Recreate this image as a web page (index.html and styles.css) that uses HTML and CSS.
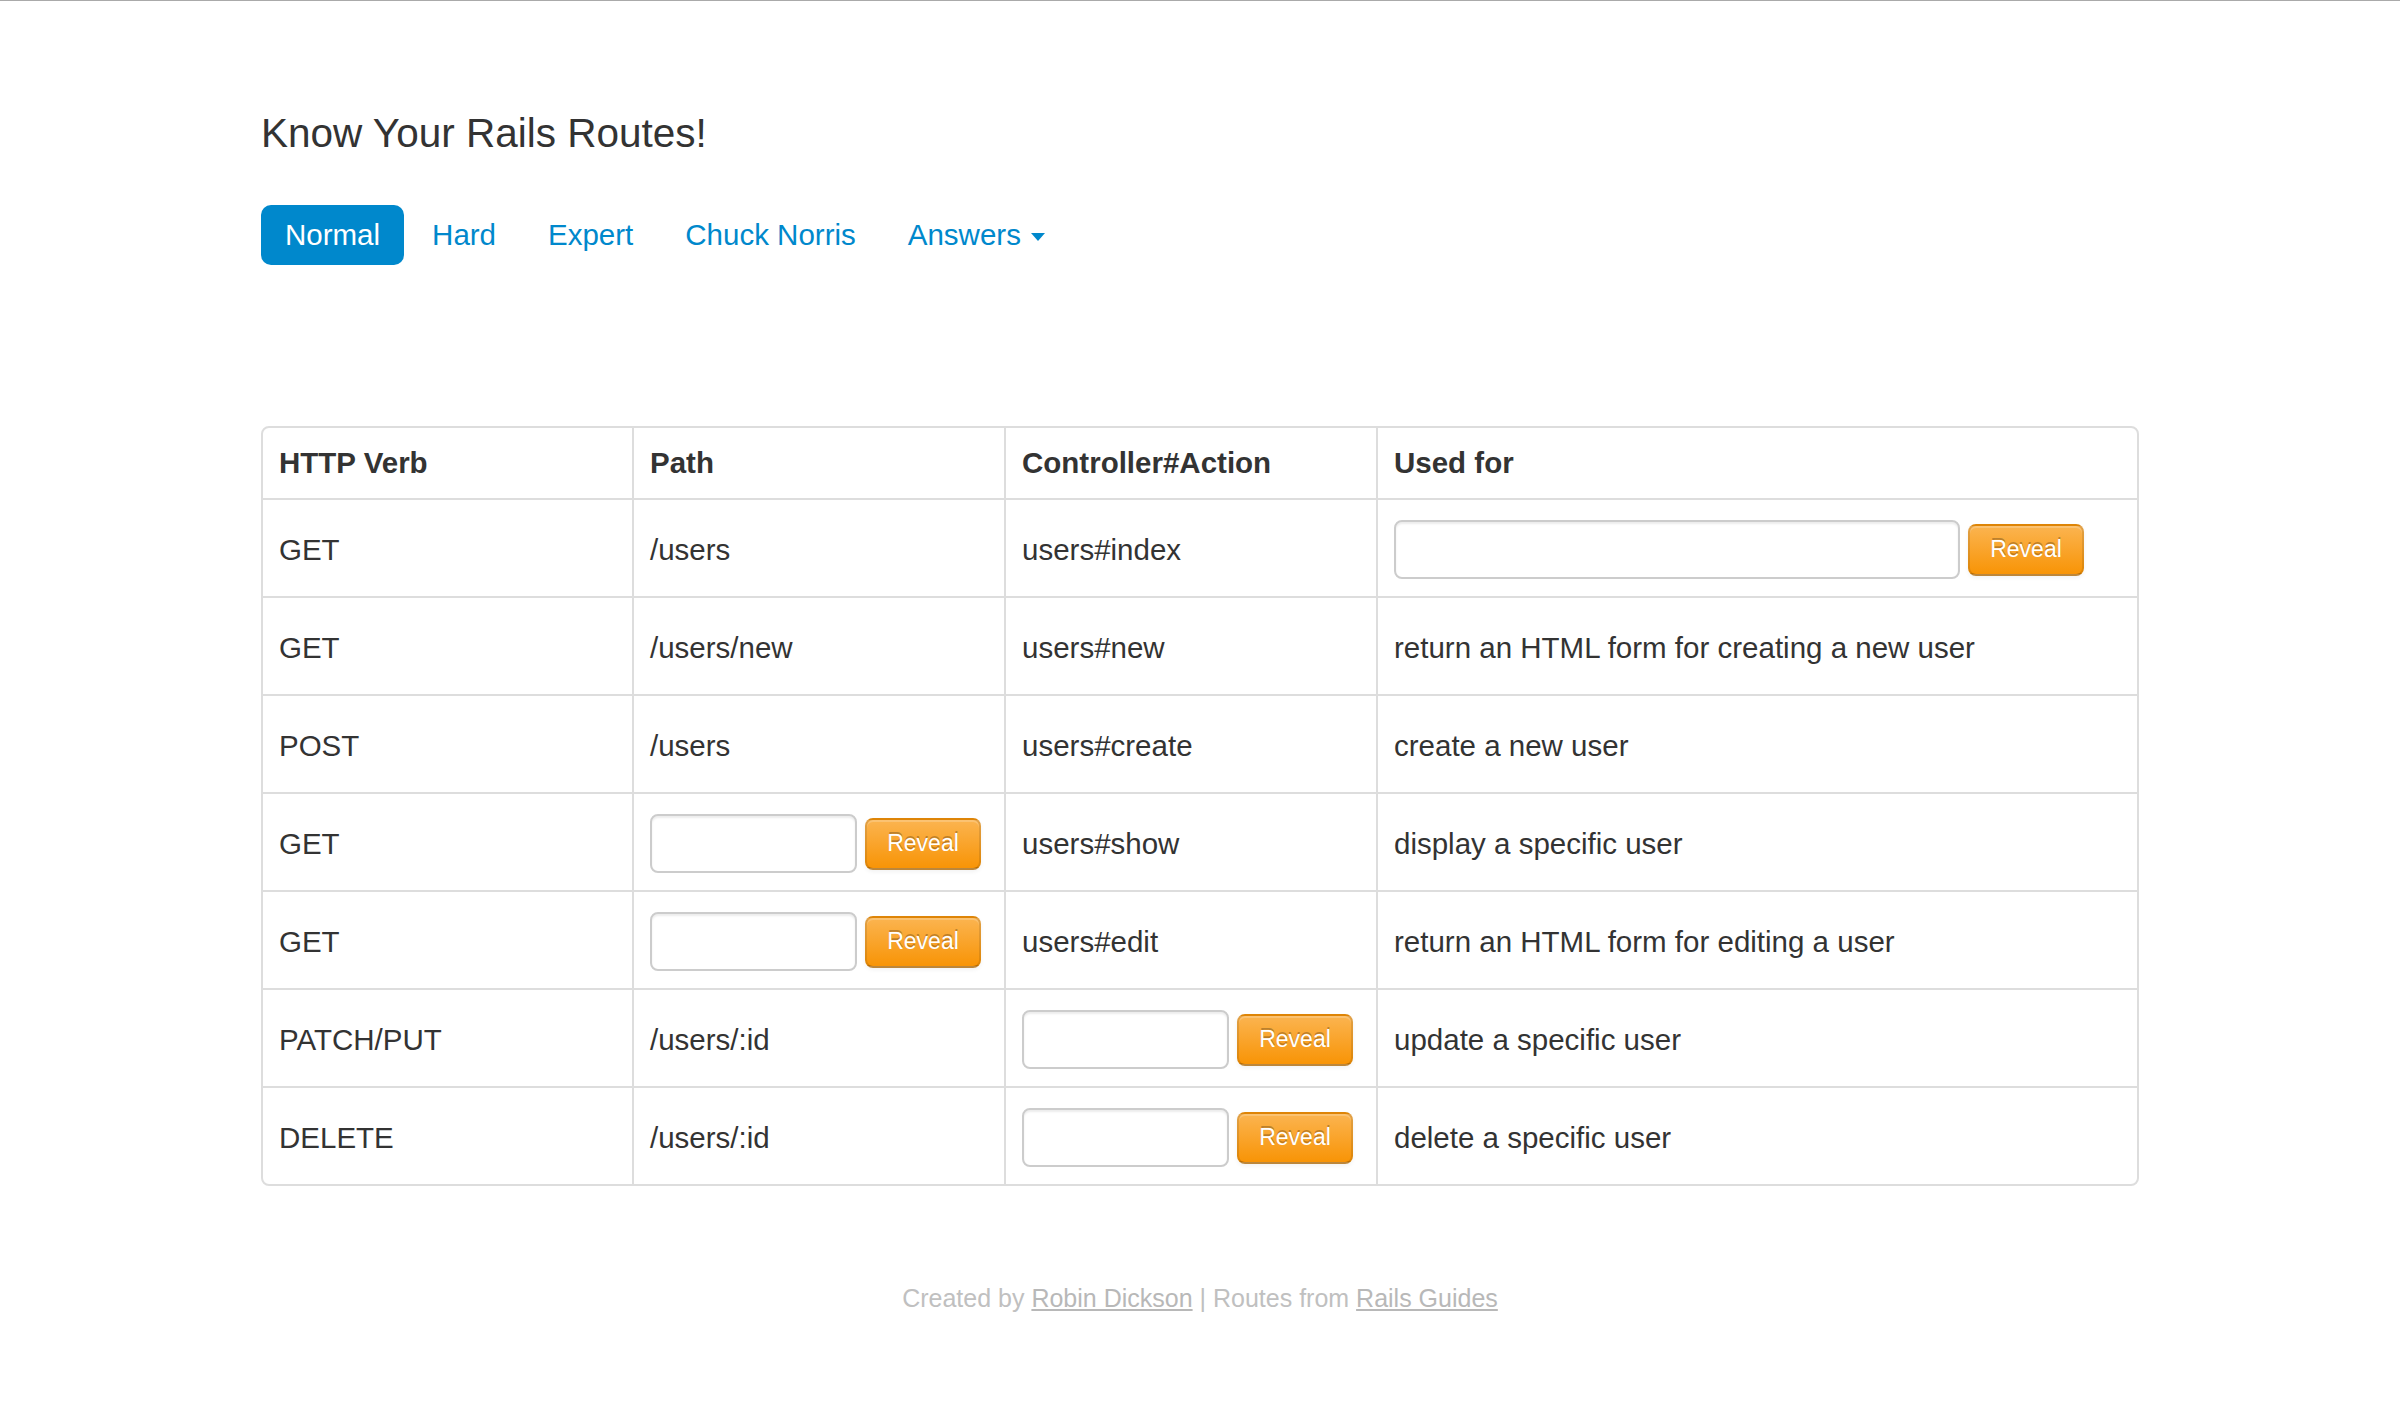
FILE: index.html
```html
<!DOCTYPE html>
<html lang="en">
<head>
<meta charset="utf-8">
<title>Know Your Rails Routes!</title>
<link rel="stylesheet" href="styles.css">
</head>
<body>
<div class="container">
  <h3 class="title">Know Your Rails Routes!</h3>
  <ul class="pills">
    <li><a class="active" href="#">Normal</a></li>
    <li><a href="#">Hard</a></li>
    <li><a href="#">Expert</a></li>
    <li><a href="#">Chuck Norris</a></li>
    <li><a href="#">Answers <b class="caret"></b></a></li>
  </ul>

  <table class="routes">
    <thead>
      <tr>
        <th class="c1">HTTP Verb</th>
        <th class="c2">Path</th>
        <th class="c3">Controller#Action</th>
        <th class="c4">Used for</th>
      </tr>
    </thead>
    <tbody>
      <tr>
        <td>GET</td>
        <td>/users</td>
        <td>users#index</td>
        <td><div class="guess"><input class="field wide" type="text"><button class="reveal">Reveal</button></div></td>
      </tr>
      <tr>
        <td>GET</td>
        <td>/users/new</td>
        <td>users#new</td>
        <td>return an HTML form for creating a new user</td>
      </tr>
      <tr>
        <td>POST</td>
        <td>/users</td>
        <td>users#create</td>
        <td>create a new user</td>
      </tr>
      <tr>
        <td>GET</td>
        <td><div class="guess"><input class="field" type="text"><button class="reveal">Reveal</button></div></td>
        <td>users#show</td>
        <td>display a specific user</td>
      </tr>
      <tr>
        <td>GET</td>
        <td><div class="guess"><input class="field" type="text"><button class="reveal">Reveal</button></div></td>
        <td>users#edit</td>
        <td>return an HTML form for editing a user</td>
      </tr>
      <tr>
        <td>PATCH/PUT</td>
        <td>/users/:id</td>
        <td><div class="guess"><input class="field" type="text"><button class="reveal">Reveal</button></div></td>
        <td>update a specific user</td>
      </tr>
      <tr>
        <td>DELETE</td>
        <td>/users/:id</td>
        <td><div class="guess"><input class="field" type="text"><button class="reveal">Reveal</button></div></td>
        <td>delete a specific user</td>
      </tr>
    </tbody>
  </table>

  <p class="footer">Created by <a href="#">Robin Dickson</a> | Routes from <a href="#">Rails Guides</a></p>
</div>
</body>
</html>
```

FILE: styles.css
```css
html, body {
  margin: 0;
  padding: 0;
  background: #fff;
}
body {
  border-top: 1px solid #aaaaaa;
  font-family: "Liberation Sans", Arial, Helvetica, sans-serif;
  color: #333;
  font-size: 29.5px;
}
.container {
  width: 1878px;
  margin: 0 auto;
}
.title {
  margin: 108px 0 0 0;
  font-size: 40.5px;
  line-height: 48px;
  font-weight: normal;
  color: #333;
}
.pills {
  list-style: none;
  margin: 48px 0 0 0;
  padding: 0;
  display: flex;
}
.pills li {
  margin-right: 4px;
}
.pills a {
  display: block;
  padding: 16px 24px;
  line-height: 28px;
  font-size: 29.5px;
  color: #0088cc;
  text-decoration: none;
  border-radius: 10px;
}
.pills a.active {
  background: #0088cc;
  color: #fff;
}
.caret {
  display: inline-block;
  width: 0;
  height: 0;
  vertical-align: top;
  margin-top: 12px;
  margin-left: 2px;
  border-top: 8px solid #0088cc;
  border-left: 7px solid transparent;
  border-right: 7px solid transparent;
}
.routes {
  margin-top: 161px;
  width: 1878px;
  table-layout: fixed;
  border-collapse: separate;
  border-spacing: 0;
  border: 2px solid #dddddd;
  border-radius: 8px;
}
.routes th, .routes td {
  box-sizing: border-box;
  padding: 0 16px;
  text-align: left;
  vertical-align: middle;
  border-left: 2px solid #dddddd;
  border-top: 2px solid #dddddd;
  line-height: 40px;
}
.routes th:first-child, .routes td:first-child {
  border-left: none;
}
.routes thead th {
  border-top: none;
  height: 70px;
  font-weight: bold;
}
.routes td {
  height: 98px;
  padding-top: 3px;
}
.c1 { width: 369px; }
.c2 { width: 372px; }
.c3 { width: 372px; }
.guess {
  display: flex;
  align-items: center;
  gap: 8px;
}
.field {
  box-sizing: border-box;
  width: 207px;
  height: 59px;
  margin: 0;
  border: 2px solid #cccccc;
  border-radius: 8px;
  background: #fff;
  box-shadow: inset 0 2px 2px rgba(0,0,0,0.075);
  font-size: 28px;
  padding: 8px 12px;
}
.field.wide {
  width: 566px;
}
.reveal {
  box-sizing: border-box;
  width: 116px;
  height: 52px;
  margin: 0;
  padding: 0;
  font-family: "Liberation Sans", Arial, Helvetica, sans-serif;
  font-size: 23px;
  color: #fff;
  text-shadow: 0 -2px 0 rgba(0,0,0,0.25);
  background: linear-gradient(to bottom, #fbb450, #f89406);
  border: 2px solid;
  border-color: rgba(0,0,0,0.1) rgba(0,0,0,0.1) rgba(0,0,0,0.25);
  border-radius: 8px;
  box-shadow: inset 0 2px 0 rgba(255,255,255,0.2), 0 2px 4px rgba(0,0,0,0.05);
}
.footer {
  margin: 92px 0 0 0;
  text-align: center;
  font-size: 25px;
  line-height: 40px;
  color: #c0c0c0;
}
.footer a {
  color: #b8b8b8;
  text-decoration: underline;
}
```
